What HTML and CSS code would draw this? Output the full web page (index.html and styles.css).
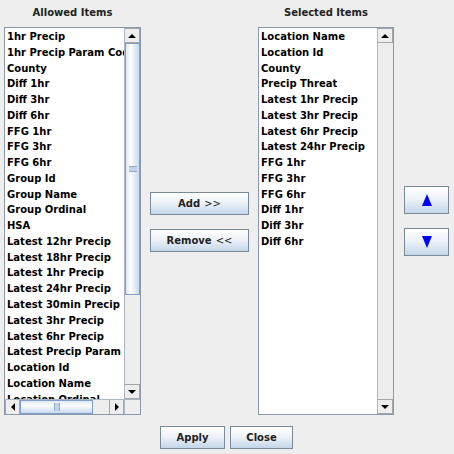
FILE: index.html
```html
<!DOCTYPE html>
<html>
<head>
<meta charset="utf-8">
<link rel="stylesheet" href="styles.css">
</head>
<body>
<div class="dialog">
  <div class="title c1">Allowed Items</div>
  <div class="title c3">Selected Items</div>

  <div class="pane pane-left c1">
    <div class="viewport">
      <ul class="list">
        <li>1hr Precip</li>
        <li>1hr Precip Param Code</li>
        <li>County</li>
        <li>Diff 1hr</li>
        <li>Diff 3hr</li>
        <li>Diff 6hr</li>
        <li>FFG 1hr</li>
        <li>FFG 3hr</li>
        <li>FFG 6hr</li>
        <li>Group Id</li>
        <li>Group Name</li>
        <li>Group Ordinal</li>
        <li>HSA</li>
        <li>Latest 12hr Precip</li>
        <li>Latest 18hr Precip</li>
        <li>Latest 1hr Precip</li>
        <li>Latest 24hr Precip</li>
        <li>Latest 30min Precip</li>
        <li>Latest 3hr Precip</li>
        <li>Latest 6hr Precip</li>
        <li>Latest Precip Param Code</li>
        <li>Location Id</li>
        <li>Location Name</li>
        <li>Location Ordinal</li>
      </ul>
    </div>
    <div class="vscroll">
      <div class="sbtn"><span class="tri up"></span></div>
      <div class="vtrack">
        <div class="vthumb"><span class="vgrip"></span></div>
      </div>
      <div class="sbtn"><span class="tri down"></span></div>
    </div>
    <div class="hscroll">
      <div class="hbtn"><span class="tri left"></span></div>
      <div class="htrack">
        <div class="hthumb"><span class="hgrip"></span></div>
      </div>
      <div class="hbtn"><span class="tri right"></span></div>
    </div>
    <div class="corner"></div>
  </div>

  <div class="midbtns c2">
    <button class="btn wide">Add <span class="thin">&gt;&gt;</span></button>
    <button class="btn wide">Remove <span class="thin">&lt;&lt;</span></button>
  </div>

  <div class="pane pane-right c3">
    <div class="viewport">
      <ul class="list">
        <li>Location Name</li>
        <li>Location Id</li>
        <li>County</li>
        <li>Precip Threat</li>
        <li>Latest 1hr Precip</li>
        <li>Latest 3hr Precip</li>
        <li>Latest 6hr Precip</li>
        <li>Latest 24hr Precip</li>
        <li>FFG 1hr</li>
        <li>FFG 3hr</li>
        <li>FFG 6hr</li>
        <li>Diff 1hr</li>
        <li>Diff 3hr</li>
        <li>Diff 6hr</li>
      </ul>
    </div>
    <div class="vscroll">
      <div class="sbtn"><span class="tri up"></span></div>
      <div class="vtrack"></div>
      <div class="sbtn"><span class="tri down"></span></div>
    </div>
  </div>

  <div class="arrowbtns c4">
    <button class="btn sq"><svg width="10" height="12" viewBox="0 0 10 12"><polygon points="5,0 10,12 0,12" fill="#0000ff"/></svg></button>
    <button class="btn sq"><svg width="10" height="12" viewBox="0 0 10 12"><polygon points="0,0 10,0 5,12" fill="#0000ff"/></svg></button>
  </div>

  <div class="footer">
    <button class="btn foot apply">Apply</button>
    <button class="btn foot close">Close</button>
  </div>
</div>
</body>
</html>
```

FILE: styles.css
```css
html, body {
  margin: 0;
  padding: 0;
  background: #eeeeee;
}
body {
  width: 454px;
  height: 454px;
  overflow: hidden;
  font-family: "DejaVu Sans", "Liberation Sans", sans-serif;
  font-weight: bold;
  font-size: 10px;
  color: #000;
}
.dialog {
  display: grid;
  grid-template-columns: 137px 99px 136px 45px;
  grid-template-rows: 27px 388px auto;
  column-gap: 9px;
  padding-left: 4px;
}
.c1 { grid-column: 1; }
.c2 { grid-column: 2; }
.c3 { grid-column: 3; }
.c4 { grid-column: 4; margin-left: 1px; }

.title {
  grid-row: 1;
  text-align: center;
  line-height: 25px;
  color: #222;
}

.pane {
  grid-row: 2;
  box-sizing: border-box;
  border: 1px solid #8a99aa;
  background: #fff;
  display: grid;
  overflow: hidden;
}
.pane-left {
  grid-template-columns: 1fr 16px;
  grid-template-rows: 1fr 15px;
}
.pane-right {
  grid-template-columns: 1fr 16px;
  grid-template-rows: 1fr;
}
.viewport {
  overflow: hidden;
  position: relative;
}
.list {
  list-style: none;
  margin: 0;
  padding: 1px 0 0 2px;
  white-space: nowrap;
}
.list li {
  line-height: 15.78px;
  height: 15.78px;
}

.vscroll {
  display: flex;
  flex-direction: column;
  background: #eeeeee;
  border-left: 1px solid #a9b6c4;
}
.sbtn {
  height: 15px;
  flex: none;
  box-sizing: border-box;
  border: 1px solid #a6a6a6;
  border-left: none;
  background: #eeeeee;
  display: flex;
  align-items: center;
  justify-content: center;
}
.vtrack {
  flex: 1;
  background: #eeeeee;
  display: flex;
  flex-direction: column;
}
.vthumb {
  height: 252px;
  box-sizing: border-box;
  border: 1px solid #7f9fc9;
  background: linear-gradient(to right, #dce7f3 0%, #ffffff 35%, #c8daee 100%);
  display: flex;
  align-items: center;
  justify-content: center;
}
.vgrip {
  width: 8px;
  height: 4px;
  border-top: 1px solid #8fa8cc;
  border-bottom: 1px solid #8fa8cc;
  background: #c2d2e8;
}

.hscroll {
  display: flex;
  background: #eeeeee;
  border-top: 1px solid #a9b6c4;
}
.hbtn {
  width: 15px;
  flex: none;
  box-sizing: border-box;
  border: 1px solid #a6a6a6;
  border-top: none;
  border-bottom: none;
  background: #eeeeee;
  display: flex;
  align-items: center;
  justify-content: center;
}
.htrack {
  flex: 1;
  display: flex;
}
.hthumb {
  width: 73px;
  box-sizing: border-box;
  border: 1px solid #7f9fc9;
  background: linear-gradient(to bottom, #dce7f3 0%, #ffffff 35%, #c8daee 100%);
  display: flex;
  align-items: center;
  justify-content: center;
}
.hgrip {
  width: 4px;
  height: 8px;
  border-left: 1px solid #8fa8cc;
  border-right: 1px solid #8fa8cc;
  background: #c2d2e8;
}
.corner {
  background: #eeeeee;
  border-top: 1px solid #a9b6c4;
  border-left: 1px solid #a9b6c4;
}

.tri {
  width: 0;
  height: 0;
  display: block;
}
.tri.up {
  border-left: 4px solid transparent;
  border-right: 4px solid transparent;
  border-bottom: 4px solid #000;
}
.tri.down {
  border-left: 4px solid transparent;
  border-right: 4px solid transparent;
  border-top: 4px solid #000;
}
.tri.left {
  border-top: 4px solid transparent;
  border-bottom: 4px solid transparent;
  border-right: 4px solid #000;
}
.tri.right {
  border-top: 4px solid transparent;
  border-bottom: 4px solid transparent;
  border-left: 4px solid #000;
}

.btn {
  font-family: "DejaVu Sans", "Liberation Sans", sans-serif;
  font-weight: bold;
  font-size: 10px;
  color: #222;
  box-sizing: border-box;
  border: 1px solid #7a8a99;
  border-radius: 0;
  background: linear-gradient(to bottom, #ffffff 0%, #eef3f9 45%, #c4d6ea 100%);
  padding: 0;
  margin: 0;
  display: flex;
  align-items: center;
  justify-content: center;
}
.thin { font-weight: normal; margin-left: 4px; }

.midbtns {
  grid-row: 2;
  align-self: center;
  display: flex;
  flex-direction: column;
  gap: 14px;
  padding-top: 1px;
}
.btn.wide {
  width: 99px;
  height: 23px;
}

.arrowbtns {
  grid-row: 2;
  align-self: center;
  display: flex;
  flex-direction: column;
  gap: 14px;
}
.btn.sq {
  width: 45px;
  height: 28px;
}

.footer {
  grid-row: 3;
  grid-column: 1 / 5;
  display: flex;
  justify-content: center;
  gap: 5px;
  margin-top: 11px;
  margin-left: 1px;
}
.btn.foot {
  height: 23px;
}
.btn.apply { width: 65px; }
.btn.close { width: 63px; }
```
